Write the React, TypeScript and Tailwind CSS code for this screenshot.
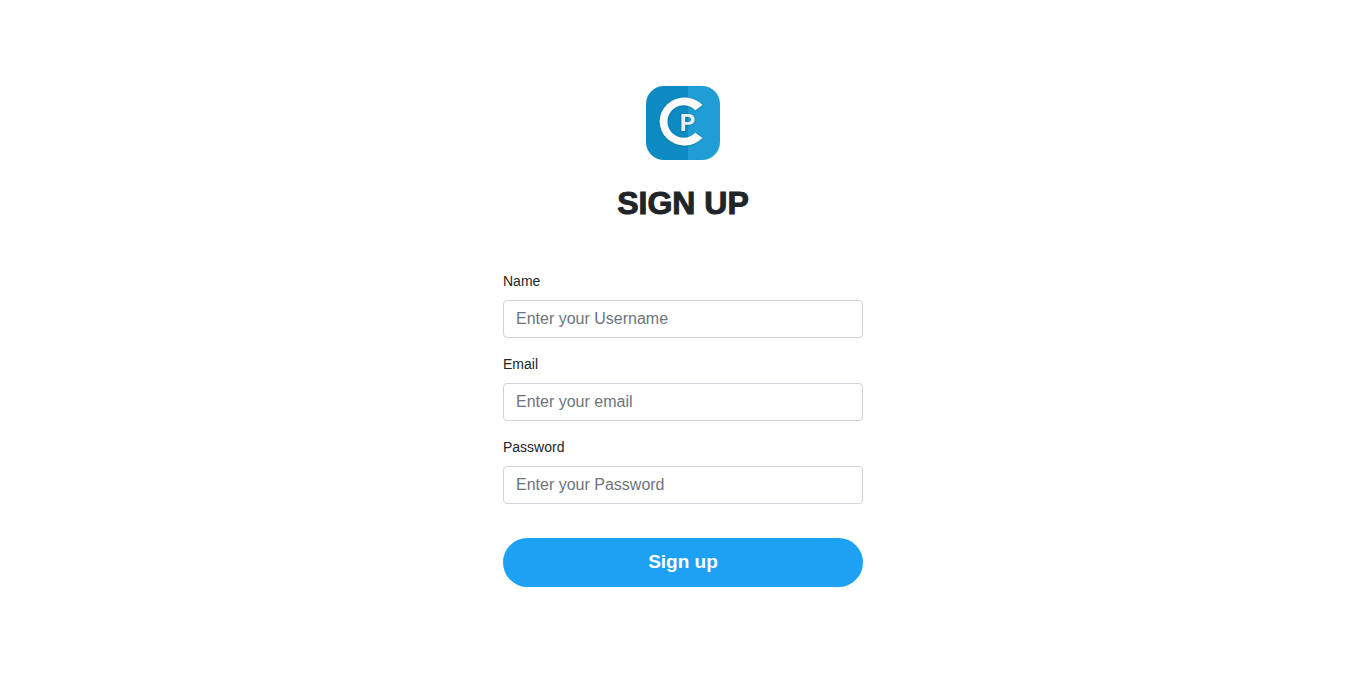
import type { InputHTMLAttributes } from "react";

function Logo() {
  return (
    <svg
      viewBox="0 0 74 74"
      className="size-[74px]"
      role="img"
      aria-label="CP"
    >
      <defs>
        <clipPath id="tile">
          <rect width="74" height="74" rx="18" />
        </clipPath>
        <filter id="soft" x="-20%" y="-20%" width="140%" height="140%">
          <feDropShadow dx="0" dy="0.3" stdDeviation="0.9" floodColor="#04405f" floodOpacity="0.5" />
        </filter>
      </defs>
      <g clipPath="url(#tile)">
        <rect width="42" height="74" fill="#0d8bc2" />
        <rect x="42" width="32" height="74" fill="#1f9ed6" />
      </g>
      <g filter="url(#soft)">
        <path
          d="M56.4 19 A24.8 23.9 0 1 0 56.4 52 L49.2 46.8 A16.2 16.2 0 1 1 49.2 24.2 Z"
          fill="#fbfbfb"
        />
        <text x="34" y="44.5" fill="#eeeeee" fontSize="24" fontWeight="700" fontFamily="Roboto, sans-serif">
          P
        </text>
      </g>
    </svg>
  );
}

type FieldProps = InputHTMLAttributes<HTMLInputElement> & {
  id: string;
  label: string;
};

function Field({ id, label, ...input }: FieldProps) {
  return (
    <div className="flex flex-col gap-2">
      <label htmlFor={id} className="text-sm leading-[21px]">
        {label}
      </label>
      <input
        id={id}
        name={id}
        className="h-[38px] w-full rounded border border-[#ced4da] bg-white px-3 text-base text-[#495057] outline-none placeholder:text-[#6c757d] focus:border-[#80bdff]"
        {...input}
      />
    </div>
  );
}

export default function App() {
  return (
    <main className="flex min-h-screen flex-col items-center bg-white px-4 pt-[86px] pb-16 font-['Liberation_Sans',Arial,sans-serif] text-[#212529]">
      <Logo />
      <h1 className="mt-6 text-[32px] leading-[38px] font-black [-webkit-text-stroke:1px_#212529]">SIGN UP</h1>
      <form className="mt-[49px] flex w-full max-w-[360px] flex-col gap-4" onSubmit={(e) => e.preventDefault()}>
        <Field id="name" label="Name" type="text" placeholder="Enter your Username" />
        <Field id="email" label="Email" type="email" placeholder="Enter your email" />
        <Field id="password" label="Password" type="password" placeholder="Enter your Password" />
        <button
          type="submit"
          className="mt-[18px] h-[49px] w-full cursor-pointer rounded-full bg-[#1da1f2] pb-px text-[19px] font-bold text-white"
        >
          Sign up
        </button>
      </form>
    </main>
  );
}
